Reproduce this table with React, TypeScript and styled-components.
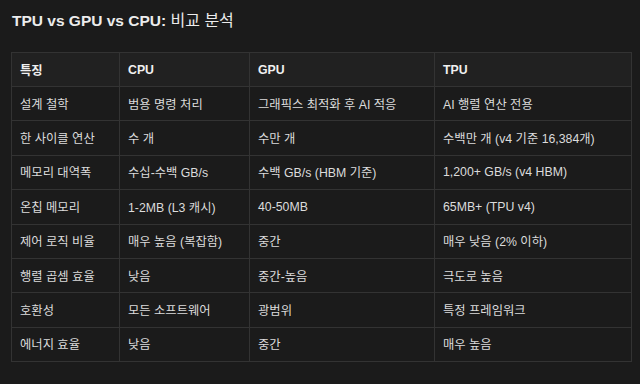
import React from "react";
import styled, { createGlobalStyle } from "styled-components";

const Global = createGlobalStyle`
  html, body { margin: 0; padding: 0; background: #1b1b1b; }
  body { font-family: "Liberation Sans", "Noto Sans CJK KR", sans-serif; }
`;

const Page = styled.div`
  padding: 9px 9px 0 11px;
  width: 640px;
  height: 384px;
  box-sizing: border-box;
  background: #1b1b1b;
  overflow: hidden;
`;

const Title = styled.h1`
  margin: 0 0 19px 1px;
  font-size: 15.5px;
  line-height: 24px;
  font-weight: 700;
  color: #ececec;
`;

const TitleKo = styled.span`
  font-weight: 400;
  font-size: 16px;
`;

const Table = styled.table`
  border-collapse: collapse;
  table-layout: fixed;
  width: 620px;
  border: 1px solid #333;
  font-size: 12.3px;
  color: #dcdcdc;
`;

const Th = styled.th`
  background: #212121;
  text-align: left;
  font-weight: 700;
  color: #f0f0f0;
  height: 34px;
  padding: 0 7px 0 8px;
  border: 1px solid #333;
  box-sizing: border-box;
`;

const Td = styled.td`
  background: #1b1b1b;
  height: 33.4px;
  padding: 0 7px 0 8px;
  border: 1px solid #333;
  white-space: nowrap;
`;

const cols = [108, 130, 185, 197];

const header = ["특징", "CPU", "GPU", "TPU"];
const rows = [
  ["설계 철학", "범용 명령 처리", "그래픽스 최적화 후 AI 적응", "AI 행렬 연산 전용"],
  ["한 사이클 연산", "수 개", "수만 개", "수백만 개 (v4 기준 16,384개)"],
  ["메모리 대역폭", "수십-수백 GB/s", "수백 GB/s (HBM 기준)", "1,200+ GB/s (v4 HBM)"],
  ["온칩 메모리", "1-2MB (L3 캐시)", "40-50MB", "65MB+ (TPU v4)"],
  ["제어 로직 비율", "매우 높음 (복잡함)", "중간", "매우 낮음 (2% 이하)"],
  ["행렬 곱셈 효율", "낮음", "중간-높음", "극도로 높음"],
  ["호환성", "모든 소프트웨어", "광범위", "특정 프레임워크"],
  ["에너지 효율", "낮음", "중간", "매우 높음"],
];

export default function App() {
  return (
    <Page>
      <Global />
      <Title>
        TPU vs GPU vs CPU: <TitleKo>비교 분석</TitleKo>
      </Title>
      <Table>
        <colgroup>
          {cols.map((w, i) => (
            <col key={i} style={{ width: w }} />
          ))}
        </colgroup>
        <thead>
          <tr>
            {header.map((h) => (
              <Th key={h}>{h}</Th>
            ))}
          </tr>
        </thead>
        <tbody>
          {rows.map((r) => (
            <tr key={r[0]}>
              {r.map((c, i) => (
                <Td key={i}>{c}</Td>
              ))}
            </tr>
          ))}
        </tbody>
      </Table>
    </Page>
  );
}
